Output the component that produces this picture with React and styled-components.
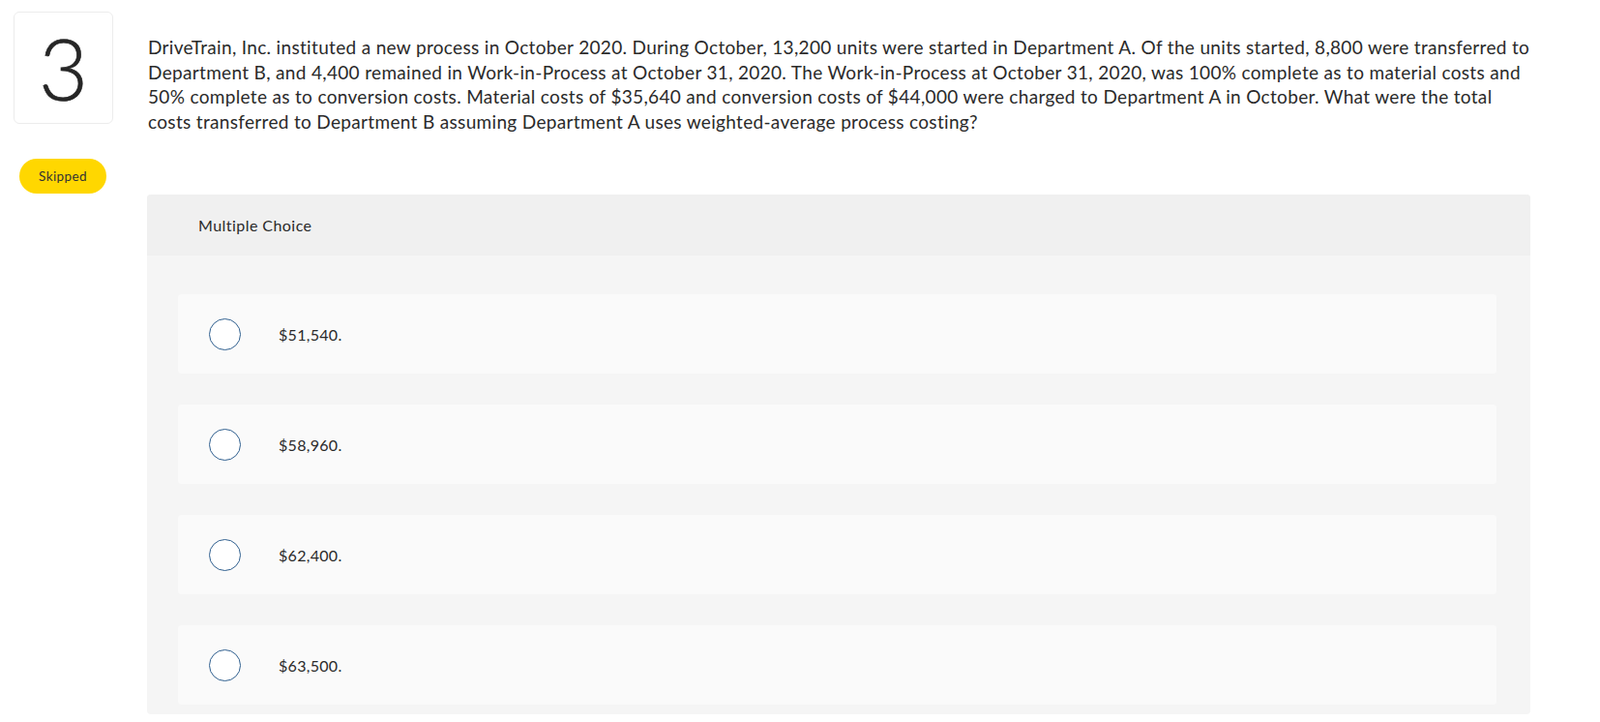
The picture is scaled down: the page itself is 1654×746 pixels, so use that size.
import styled, { createGlobalStyle } from "styled-components";

const GlobalStyle = createGlobalStyle`
  body {
    margin: 0;
    background: #ffffff;
    font-family: "Lato", "Liberation Sans", sans-serif;
    color: #2d2d2d;
  }
`;

const Page = styled.div`
  display: flex;
  padding-top: 12px;
`;

const Aside = styled.div`
  width: 138px;
  padding-left: 14px;
  flex-shrink: 0;
  display: flex;
  flex-direction: column;
  align-items: flex-start;
`;

const NumberBox = styled.div`
  width: 101px;
  height: 114px;
  border: 1px solid #ececec;
  border-radius: 6px;
  display: flex;
  align-items: center;
  justify-content: center;
  font-size: 88px;
  font-weight: 300;
  -webkit-text-stroke: 0.7px #262626;
  color: #262626;
  line-height: 1;
`;

const Badge = styled.div`
  margin-top: 36px;
  margin-left: 6px;
  width: 90px;
  height: 36px;
  border-radius: 18px;
  background: #ffd700;
  display: flex;
  align-items: center;
  justify-content: center;
  font-size: 13.5px;
  letter-spacing: 0.4px;
  color: #333;
`;

const Main = styled.div`
  flex: 1;
  padding-right: 72px;
`;

const Question = styled.p`
  margin: 24px 0 0 1px;
  font-size: 19px;
  letter-spacing: 0.33px;
  line-height: 25.5px;
  color: #2a2a2a;
`;

const Panel = styled.div`
  margin-top: 63px;
  border-radius: 4px;
  overflow: hidden;
  background: #f5f5f5;
`;

const PanelHeader = styled.div`
  height: 63px;
  background: #f0f0f0;
  display: flex;
  align-items: center;
  padding-left: 53px;
  font-size: 16px;
  letter-spacing: 0.45px;
  color: #2a2a2a;
`;

const Choices = styled.div`
  display: flex;
  flex-direction: column;
  gap: 32px;
  padding: 40px 35px 10px 32px;
`;

const Choice = styled.label`
  height: 82px;
  border-radius: 4px;
  background: #fafafa;
  display: flex;
  align-items: center;
  padding-left: 32px;
  gap: 39px;
  font-size: 16px;
  letter-spacing: 0.3px;
  color: #2a2a2a;
  cursor: pointer;
`;

const Radio = styled.span`
  width: 31px;
  height: 31px;
  border: 1.5px solid #2f5f8f;
  border-radius: 50%;
  background: #fff;
  flex-shrink: 0;
`;

const choices = ["$51,540.", "$58,960.", "$62,400.", "$63,500."];

const App = () => {
  return (
    <Page>
      <GlobalStyle />
      <Aside>
        <NumberBox>3</NumberBox>
        <Badge>Skipped</Badge>
      </Aside>
      <Main>
        <Question>
          DriveTrain, Inc. instituted a new process in October 2020. During October, 13,200 units were
          started in Department A. Of the units started, 8,800 were transferred to Department B, and 4,400
          remained in Work-in-Process at October 31, 2020. The Work-in-Process at October 31, 2020, was 100%
          complete as to material costs and 50% complete as to conversion costs. Material costs of $35,640
          and conversion costs of $44,000 were charged to Department A in October. What were the total costs
          transferred to Department B assuming Department A uses weighted-average process costing?
        </Question>
        <Panel>
          <PanelHeader>Multiple Choice</PanelHeader>
          <Choices>
            {choices.map((item, index) => (
              <Choice key={index}>
                <Radio />
                {item}
              </Choice>
            ))}
          </Choices>
        </Panel>
      </Main>
    </Page>
  );
};

export default App;
